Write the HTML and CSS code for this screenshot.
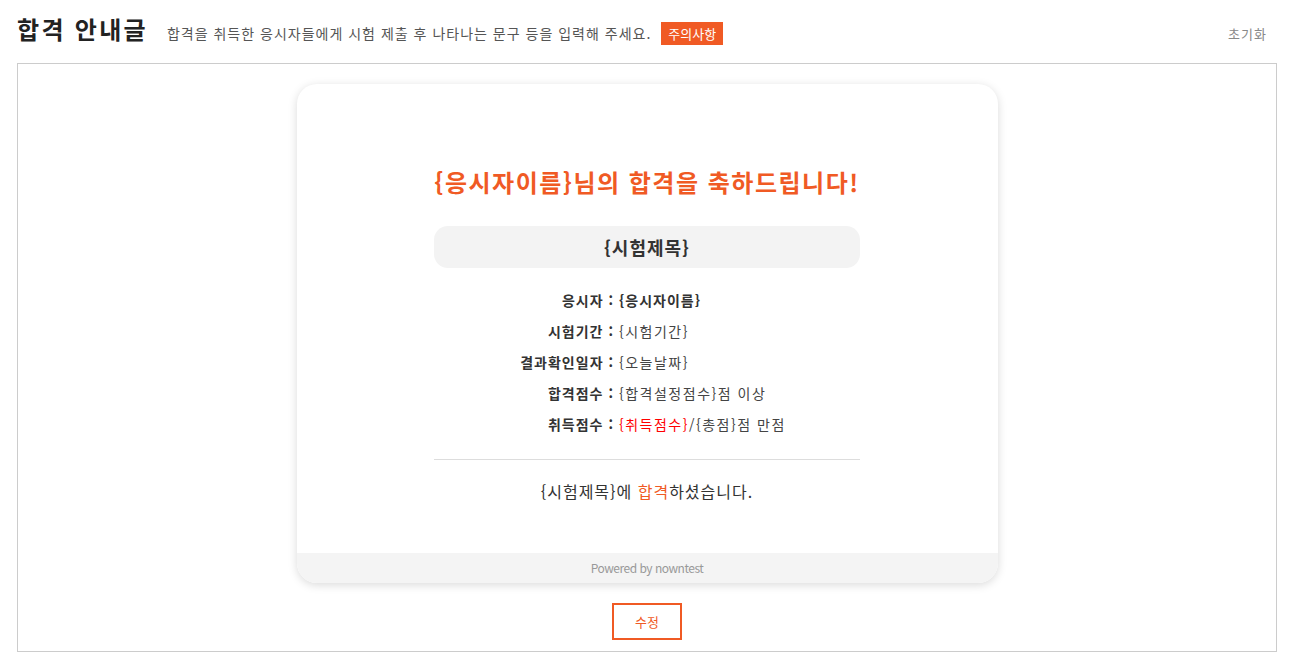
FILE: index.html
```html
<!DOCTYPE html>
<html lang="ko">
<head>
    <meta charset="UTF-8">
    <meta name="viewport" content="width=device-width, initial-scale=1.0">
    <title>합격 안내글</title>
    <link rel="stylesheet" href="styles.css">
</head>
<body>

    <div class="page">
        <!-- Header -->
        <div class="page-header">
            <h1 class="page-title">합격 안내글</h1>
            <p class="page-desc">합격을 취득한 응시자들에게 시험 제출 후 나타나는 문구 등을 입력해 주세요.</p>
            <span class="notice-badge">주의사항</span>
            <a class="reset-link" href="#">초기화</a>
        </div>

        <!-- Preview -->
        <div class="preview-box">
            <div class="pass-card">
                <div class="pass-body">
                    <h2 class="pass-heading">{응시자이름}님의 합격을 축하드립니다!</h2>
                    <div class="exam-title">{시험제목}</div>

                    <dl class="info-list">
                        <div class="info-row">
                            <dt>응시자 :</dt>
                            <dd class="strong">{응시자이름}</dd>
                        </div>
                        <div class="info-row">
                            <dt>시험기간 :</dt>
                            <dd>{시험기간}</dd>
                        </div>
                        <div class="info-row">
                            <dt>결과확인일자 :</dt>
                            <dd>{오늘날짜}</dd>
                        </div>
                        <div class="info-row">
                            <dt>합격점수 :</dt>
                            <dd>{합격설정점수}점 이상</dd>
                        </div>
                        <div class="info-row">
                            <dt>취득점수 :</dt>
                            <dd><span class="score">{취득점수}</span>/{총점}점 만점</dd>
                        </div>
                    </dl>

                    <hr class="divider">

                    <p class="pass-message">{시험제목}에 <span class="accent">합격</span>하셨습니다.</p>
                </div>
                <div class="pass-footer">Powered by nowntest</div>
            </div>

            <button class="edit-btn" type="button">수정</button>
        </div>
    </div>

</body>
</html>
```

FILE: styles.css
```css
body {
    font-family: 'Noto Sans CJK KR', 'Noto Sans', sans-serif;
    margin: 0;
    padding: 0;
    background-color: #fff;
    color: #333;
}

.page {
    padding: 0 19px 0 17px;
}

.page-header {
    display: flex;
    align-items: baseline;
    height: 63px;
    padding-top: 11px;
    box-sizing: border-box;
}

.page-title {
    margin: 0;
    font-size: 24px;
    font-weight: 700;
    line-height: 36px;
    color: #222;
    letter-spacing: 2.3px;
}

.page-desc {
    margin: 0 0 0 19px;
    font-size: 14px;
    line-height: 20px;
    color: #555;
    letter-spacing: 1px;
}

.notice-badge {
    margin-left: 10px;
    padding: 0 7px;
    background-color: #f05a24;
    color: #fff;
    font-size: 13px;
    line-height: 23px;
}

.reset-link {
    margin-left: auto;
    margin-right: 10px;
    font-size: 13px;
    color: #888;
    text-decoration: none;
    letter-spacing: 1px;
}

.preview-box {
    border: 1px solid #ccc;
    padding: 20px 0 11px;
    display: flex;
    flex-direction: column;
    align-items: center;
}

.pass-card {
    width: 701px;
    background-color: #fff;
    border-radius: 20px;
    box-shadow: 0 2px 10px rgba(0, 0, 0, 0.15);
    overflow: hidden;
}

.pass-body {
    width: 426px;
    margin: 0 auto;
    padding: 80px 0 50px;
}

.pass-heading {
    margin: 0;
    text-align: center;
    font-size: 24px;
    font-weight: 700;
    line-height: 36px;
    color: #f05a24;
    letter-spacing: 1.5px;
}

.exam-title {
    margin-top: 26px;
    height: 42px;
    line-height: 42px;
    border-radius: 14px;
    background-color: #f3f3f3;
    text-align: center;
    font-size: 18px;
    font-weight: 700;
    color: #333;
    letter-spacing: 1px;
}

.info-list {
    margin: 17px 0 0;
}

.info-row {
    display: flex;
    line-height: 31px;
    font-size: 14px;
}

.info-row dt {
    width: 180px;
    text-align: right;
    font-weight: 700;
    color: #333;
    letter-spacing: 1px;
}

.info-row dd {
    margin: 0 0 0 5px;
    color: #444;
    letter-spacing: 1.5px;
}

.info-row dd.strong {
    font-weight: 700;
    color: #333;
    letter-spacing: 1px;
}

.score {
    color: #ff0000;
}

.divider {
    margin: 19px 0 0;
    border: none;
    border-top: 1px solid #ddd;
}

.pass-message {
    margin: 19px 0 0;
    text-align: center;
    font-size: 16px;
    line-height: 24px;
    color: #333;
    letter-spacing: 1px;
}

.accent {
    color: #f05a24;
}

.pass-footer {
    height: 30px;
    line-height: 30px;
    background-color: #f4f4f4;
    text-align: center;
    font-size: 12px;
    color: #999;
    letter-spacing: -0.5px;
}

.edit-btn {
    margin-top: 20px;
    width: 70px;
    height: 37px;
    border: 2px solid #f05a24;
    background-color: #fff;
    color: #f05a24;
    font-family: inherit;
    font-size: 13px;
    cursor: pointer;
}
```
